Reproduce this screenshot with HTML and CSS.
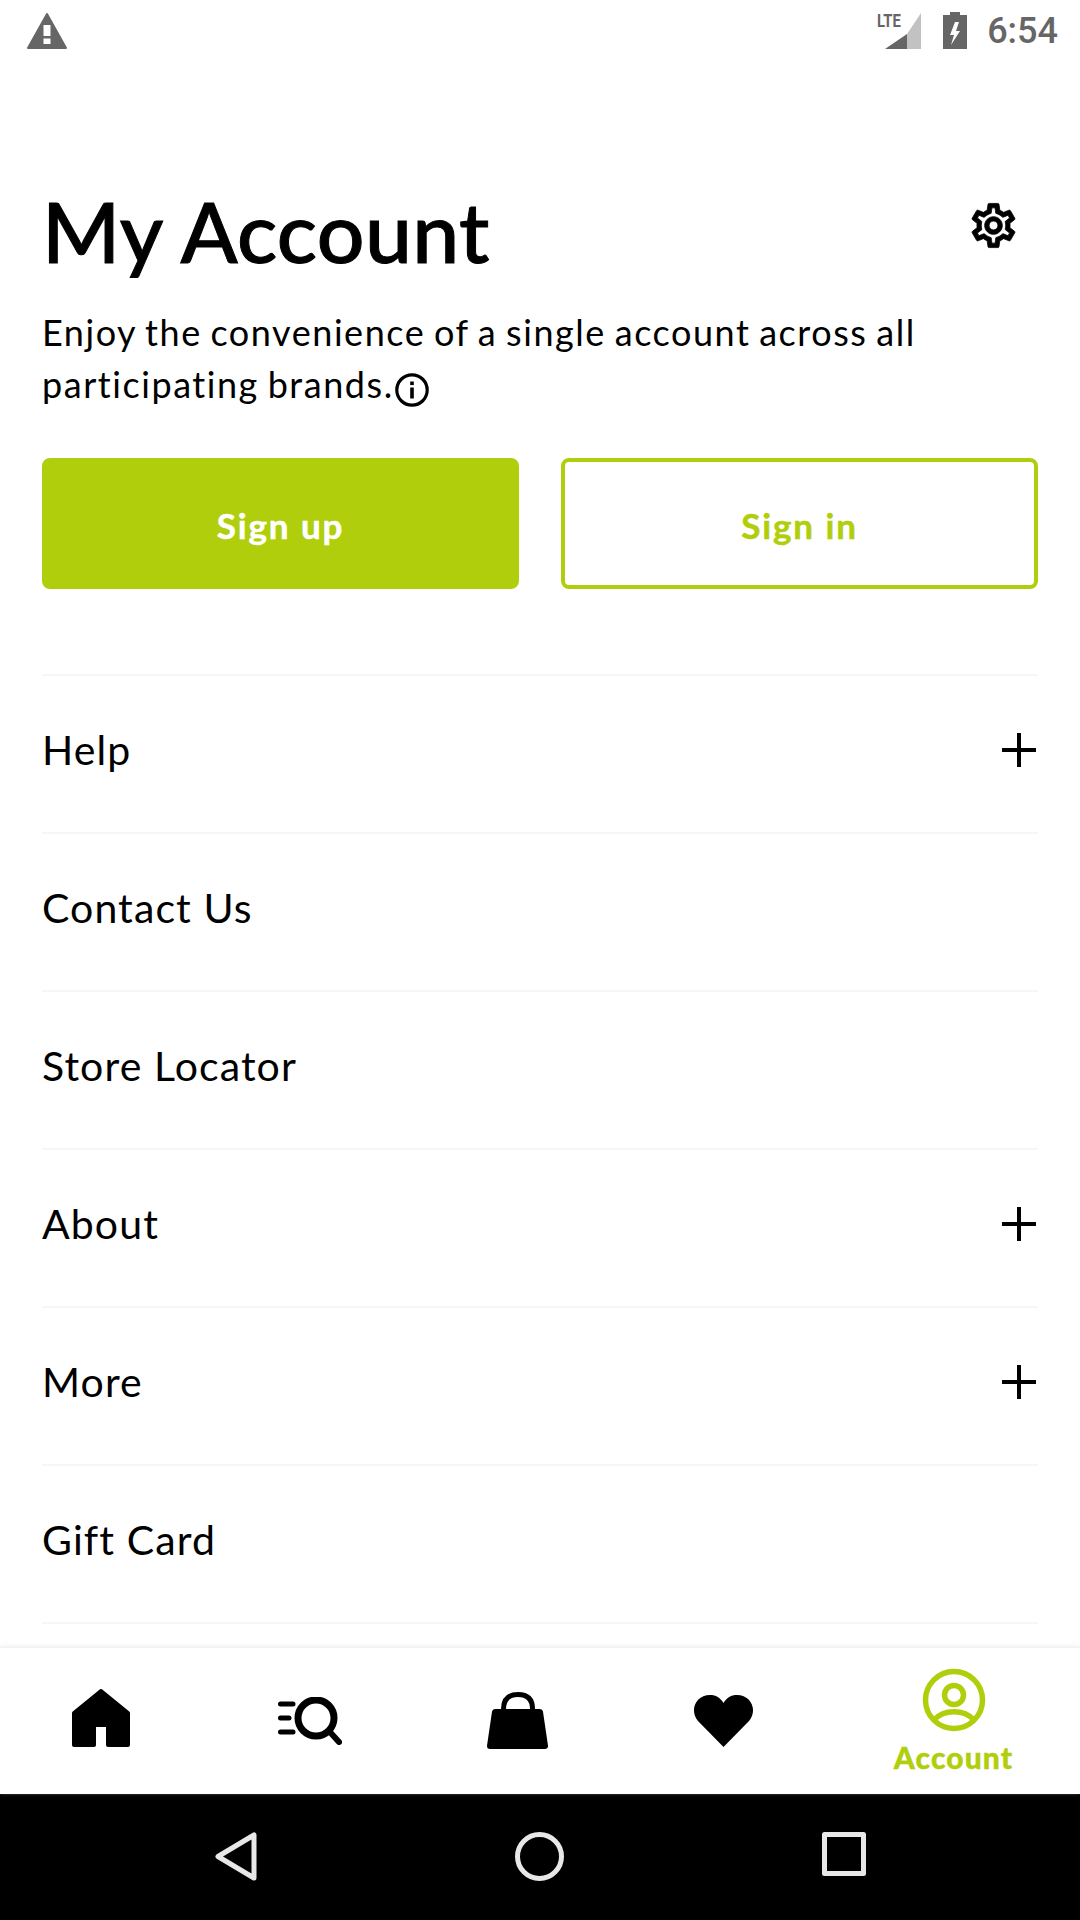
FILE: index.html
```html
<!DOCTYPE html>
<html lang="en">
<head>
	<meta charset="UTF-8">
	<title>My Account</title>
	<link rel="stylesheet" href="styles.css">
</head>
<body>
	<div class="status">
		<svg class="warn" width="40" height="36" viewBox="0 0 40 36"><path fill="#666" stroke="#666" stroke-width="2" stroke-linejoin="round" d="M20 1 L39 35 H1 Z"/><rect fill="white" x="16.500" y="12" width="7" height="11"/><rect fill="white" x="16.500" y="25.500" width="7" height="5.500"/></svg>
		<div class="signal">
			<span class="lte">LTE</span>
			<svg width="36" height="36" viewBox="0 0 36 36"><path fill="#c2c2c2" d="M36 0 V36 H22 V21 Z"/><path fill="#666" d="M22 21 V36 H0 Z"/></svg>
		</div>
		<svg class="battery" width="24" height="37" viewBox="0 0 24 37"><path fill="#666" fill-rule="evenodd" d="M7 0 H17 V3 H24 V37 H0 V3 H7 Z M12 10 L7 23 H11 L8 33 L17 19 H13 L16 10 Z"/></svg>
		<span class="time">6:54</span>
	</div>

	<main class="account">
		<div class="head">
			<h1>My Account</h1>
			<svg class="gear" width="53" height="53" viewBox="0 0 24 24"><path stroke="#000" stroke-width=".35" d="M19.43 12.98c.04-.32.07-.64.07-.98 0-.34-.03-.66-.07-.98l2.11-1.65c.19-.15.24-.42.12-.64l-2-3.46c-.09-.16-.26-.25-.44-.25-.06 0-.12.01-.17.03l-2.49 1c-.52-.4-1.08-.73-1.69-.98l-.38-2.65C14.46 2.18 14.25 2 14 2h-4c-.25 0-.46.18-.49.42l-.38 2.65c-.61.25-1.17.59-1.69.98l-2.49-1c-.06-.02-.12-.03-.18-.03-.17 0-.34.09-.43.25l-2 3.46c-.13.22-.07.49.12.64l2.11 1.65c-.04.32-.07.65-.07.98 0 .33.03.66.07.98l-2.11 1.65c-.19.15-.24.42-.12.64l2 3.46c.09.16.26.25.44.25.06 0 .12-.01.17-.03l2.49-1c.52.4 1.08.73 1.69.98l.38 2.65c.03.24.24.42.49.42h4c.25 0 .46-.18.49-.42l.38-2.65c.61-.25 1.17-.59 1.69-.98l2.49 1c.06.02.12.03.18.03.17 0 .34-.09.43-.25l2-3.46c.12-.22.07-.49-.12-.64l-2.11-1.65zm-1.98-1.71c.04.31.05.52.05.73 0 .21-.02.43-.05.73l-.14 1.13.89.7 1.08.84-.7 1.21-1.27-.51-1.04-.42-.9.68c-.43.32-.84.56-1.25.73l-1.06.43-.16 1.13-.2 1.35h-1.4l-.19-1.35-.16-1.13-1.06-.43c-.43-.18-.83-.41-1.23-.71l-.91-.7-1.06.43-1.27.51-.7-1.21 1.08-.84.89-.7-.14-1.13c-.03-.31-.05-.54-.05-.74s.02-.43.05-.73l.14-1.13-.89-.7-1.08-.84.7-1.21 1.27.51 1.04.42.9-.68c.43-.32.84-.56 1.25-.73l1.06-.43.16-1.13.2-1.35h1.39l.19 1.35.16 1.13 1.06.43c.43.18.83.41 1.23.71l.91.7 1.06-.43 1.27-.51.7 1.21-1.07.85-.89.7.14 1.13zM12 8c-2.21 0-4 1.79-4 4s1.79 4 4 4 4-1.79 4-4-1.79-4-4-4zm0 6c-1.1 0-2-.9-2-2s.9-2 2-2 2 .9 2 2-.9 2-2 2z"/></svg>
		</div>
		<p class="intro">Enjoy the convenience of a single account across all participating brands.<svg class="info" width="34" height="34" viewBox="0 0 34 34"><circle cx="17" cy="17" r="15.2" fill="none" stroke="#000" stroke-width="3.2"/><rect x="15.200" y="14.500" width="3.600" height="11"/><rect x="15.200" y="8.500" width="3.600" height="3.600"/></svg></p>

		<div class="buttons">
			<button class="btn btn-fill" type="button">Sign up</button>
			<button class="btn btn-line" type="button">Sign in</button>
		</div>

		<ul class="menu">
			<li>Help<span class="plus"></span></li>
			<li>Contact Us</li>
			<li>Store Locator</li>
			<li>About<span class="plus"></span></li>
			<li>More<span class="plus"></span></li>
			<li>Gift Card</li>
		</ul>
	</main>

	<nav class="tabs">
		<a class="tab">
			<svg width="58" height="58" viewBox="0 0 58 58"><path stroke="#000" stroke-width="4" stroke-linejoin="round" d="M29 2 L56 24 V56 H36 V36 H22 V56 H2 V24 Z"/></svg>
		</a>
		<a class="tab tab-search">
			<svg width="64" height="48" viewBox="0 0 64 48" fill="none" stroke="#000"><circle cx="38" cy="21" r="18" stroke-width="7"/><path stroke-width="6" stroke-linecap="round" d="M51 34 L61 45"/><path stroke-width="5" stroke-linecap="round" d="M2.500 7 H15 M2.500 21 H11 M2.500 35 H15"/></svg>
		</a>
		<a class="tab tab-bag">
			<svg width="61" height="57" viewBox="0 0 61 57"><path fill="none" stroke="#000" stroke-width="5" d="M16.500 19 V17 C16.500 7 22 2.500 31 2.500 C40 2.500 45.500 7 45.500 17 V19"/><path stroke="#000" stroke-width="6" stroke-linejoin="round" d="M8 20 H53 L58 54 H3 Z"/></svg>
		</a>
		<a class="tab tab-heart">
			<svg width="61" height="52" viewBox="0 0 61 52"><path d="M30.500 52 L5 26 C-4 15 3 0 17 0 C23 0 27 2.500 30.500 8 C34 2.500 38 0 44 0 C58 0 65 15 56 26 Z"/></svg>
		</a>
		<a class="tab tab-on">
			<svg width="64" height="64" viewBox="0 0 64 64" fill="none" stroke="#b1ce0c" stroke-width="5.500"><circle cx="32" cy="32" r="28.500"/><circle cx="32" cy="27" r="9.500"/><path d="M12 52 C22 41 42 41 52 52"/></svg>
			<span>Account</span>
		</a>
	</nav>

	<div class="sysnav">
		<svg width="42" height="49" viewBox="0 0 42 49" fill="none" stroke="#e8e8e8" stroke-width="5" stroke-linejoin="round"><path d="M39 3 V46 L3 24.500 Z"/></svg>
		<svg width="49" height="49" viewBox="0 0 49 49" fill="none" stroke="#e8e8e8" stroke-width="5"><circle cx="24.500" cy="24.500" r="22"/></svg>
		<svg width="44" height="44" viewBox="0 0 44 44" fill="none" stroke="#e8e8e8" stroke-width="5" stroke-linejoin="round"><rect x="2.500" y="2.500" width="39" height="39"/></svg>
	</div>
</body>
</html>
```

FILE: styles.css
```css
* {
	box-sizing: border-box;
}

body {
	width: 1080px;
	height: 1920px;
	margin: 0;
	display: flex;
	flex-direction: column;
	overflow: hidden;
	background: white;
	color: black;
	font-family: "Lato", "Liberation Sans", sans-serif;
}

.status {
	height: 62px;
	flex: none;
	display: flex;
	align-items: flex-start;
	padding: 12px 22px 0 27px;
	color: #666;
}

.warn {
	margin-top: 1px;
	margin-right: auto;
}

.signal {
	position: relative;
	width: 36px;
	height: 36px;
	margin-top: 1px;
	margin-right: 22px;
}

.signal svg {
	display: block;
}

.lte {
	position: absolute;
	left: -8px;
	top: 0;
	font: bold 19px/15px Roboto, sans-serif;
	transform: scaleX(.78);
	transform-origin: left top;
}

.time {
	margin-left: 20px;
	margin-top: 1px;
	font: 500 36px/36px Roboto, sans-serif;
}

.account {
	flex: 1;
	min-height: 0;
	padding: 0 42px;
	overflow: hidden;
}

.head {
	display: flex;
	justify-content: space-between;
	align-items: flex-start;
	margin-top: 126px;
}

h1 {
	margin: 0;
	font-size: 84px;
	font-weight: 500;
	line-height: 86px;
	letter-spacing: .4px;
	-webkit-text-stroke: 1px black;
}

.gear {
	margin-top: 11px;
	margin-right: 18px;
}

.intro {
	margin: 32px 0 0;
	font-size: 36px;
	line-height: 52px;
	width: 960px;
	letter-spacing: 1.55px;
	word-spacing: -2px;
}

.info {
	vertical-align: -9px;
	margin-left: 1px;
}

.buttons {
	display: flex;
	gap: 42px;
	margin-top: 48px;
}

.btn {
	flex: 1;
	height: 131px;
	padding: 2px 0 0;
	border: 4px solid #b1ce0c;
	border-radius: 8px;
	font: bold 35px "Lato", sans-serif;
	letter-spacing: 1.9px;
	-webkit-text-stroke: .5px;
}

.btn-fill {
	background: #b1ce0c;
	color: white;
}

.btn-line {
	background: white;
	color: #b1ce0c;
}

.menu {
	list-style: none;
	margin: 85px 0 0;
	padding: 0;
	border-top: 2px solid #f6f6f6;
}

.menu li {
	height: 158px;
	display: flex;
	justify-content: space-between;
	align-items: center;
	padding-bottom: 10px;
	border-bottom: 2px solid #f6f6f6;
	font-size: 41px;
	letter-spacing: 1.1px;
}

/* plus sign drawn from two bars */
.plus {
	position: relative;
	width: 34px;
	height: 34px;
	margin-top: 2px;
	margin-right: 2px;
}

.plus::before,
.plus::after {
	content: "";
	position: absolute;
	background: black;
}

.plus::before {
	left: 0;
	right: 0;
	top: 15px;
	height: 4px;
}

.plus::after {
	top: 0;
	bottom: 0;
	left: 15px;
	width: 4px;
}

.tabs {
	height: 147px;
	flex: none;
	display: grid;
	grid-template-columns: 202px 216px 198px 214px 1fr;
	padding-right: 3px;
	border-top: 1px solid #f2f2f2;
	box-shadow: 0 -2px 4px #f4f4f4;
	position: relative;
	background: white;
}

.tab {
	display: flex;
	flex-direction: column;
	align-items: center;
	padding-top: 41px;
}

.tab svg {
	display: block;
}

.tab-search {
	padding-top: 49px;
}

.tab-bag {
	padding-top: 44px;
}

.tab-heart {
	padding-top: 47px;
}

.tab-on {
	padding-top: 20px;
	color: #b1ce0c;
	font-size: 30px;
	font-weight: 900;
	line-height: 36px;
	letter-spacing: 1.1px;
	-webkit-text-stroke: .4px;
}

.tab-on span {
	margin-top: 7px;
}

.sysnav {
	height: 126px;
	flex: none;
	display: flex;
	align-items: flex-start;
	justify-content: space-between;
	padding: 38px 214px 0 215px;
	background: black;
}
```
